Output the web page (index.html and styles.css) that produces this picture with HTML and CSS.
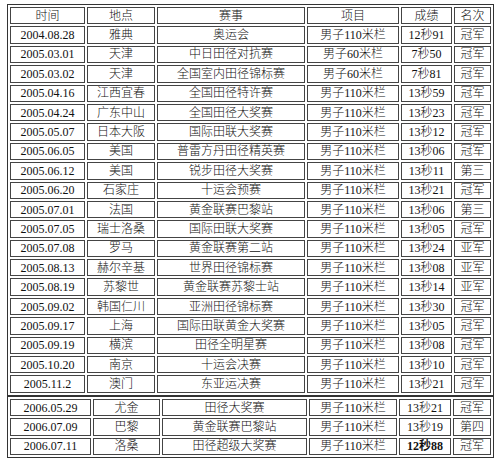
FILE: index.html
```html
<!DOCTYPE html>
<html>
<head>
<meta charset="utf-8">
<link rel="stylesheet" href="styles.css">
</head>
<body>
<div class="wrap">
<table class="rec rec-a">
<tr><td class="c1">时间</td><td class="c2">地点</td><td class="c3">赛事</td><td class="c4">项目</td><td class="c5">成绩</td><td class="c6">名次</td></tr>
<tr><td>2004.08.28</td><td>雅典</td><td>奥运会</td><td>男子110米栏</td><td>12秒91</td><td>冠军</td></tr>
<tr><td>2005.03.01</td><td>天津</td><td>中日田径对抗赛</td><td>男子60米栏</td><td>7秒50</td><td>冠军</td></tr>
<tr><td>2005.03.02</td><td>天津</td><td>全国室内田径锦标赛</td><td>男子60米栏</td><td>7秒81</td><td>冠军</td></tr>
<tr><td>2005.04.16</td><td>江西宜春</td><td>全国田径特许赛</td><td>男子110米栏</td><td>13秒59</td><td>冠军</td></tr>
<tr><td>2005.04.24</td><td>广东中山</td><td>全国田径大奖赛</td><td>男子110米栏</td><td>13秒23</td><td>冠军</td></tr>
<tr><td>2005.05.07</td><td>日本大阪</td><td>国际田联大奖赛</td><td>男子110米栏</td><td>13秒12</td><td>冠军</td></tr>
<tr><td>2005.06.05</td><td>美国</td><td>普雷方丹田径精英赛</td><td>男子110米栏</td><td>13秒06</td><td>冠军</td></tr>
<tr><td>2005.06.12</td><td>美国</td><td>锐步田径大奖赛</td><td>男子110米栏</td><td>13秒11</td><td>第三</td></tr>
<tr><td>2005.06.20</td><td>石家庄</td><td>十运会预赛</td><td>男子110米栏</td><td>13秒21</td><td>冠军</td></tr>
<tr><td>2005.07.01</td><td>法国</td><td>黄金联赛巴黎站</td><td>男子110米栏</td><td>13秒06</td><td>第三</td></tr>
<tr><td>2005.07.05</td><td>瑞士洛桑</td><td>国际田联大奖赛</td><td>男子110米栏</td><td>13秒05</td><td>冠军</td></tr>
<tr><td>2005.07.08</td><td>罗马</td><td>黄金联赛第二站</td><td>男子110米栏</td><td>13秒24</td><td>亚军</td></tr>
<tr><td>2005.08.13</td><td>赫尔辛基</td><td>世界田径锦标赛</td><td>男子110米栏</td><td>13秒08</td><td>亚军</td></tr>
<tr><td>2005.08.19</td><td>苏黎世</td><td>黄金联赛苏黎士站</td><td>男子110米栏</td><td>13秒14</td><td>亚军</td></tr>
<tr><td>2005.09.02</td><td>韩国仁川</td><td>亚洲田径锦标赛</td><td>男子110米栏</td><td>13秒30</td><td>冠军</td></tr>
<tr><td>2005.09.17</td><td>上海</td><td>国际田联黄金大奖赛</td><td>男子110米栏</td><td>13秒05</td><td>冠军</td></tr>
<tr><td>2005.09.19</td><td>横滨</td><td>田径全明星赛</td><td>男子110米栏</td><td>13秒08</td><td>冠军</td></tr>
<tr><td>2005.10.20</td><td>南京</td><td>十运会决赛</td><td>男子110米栏</td><td>13秒10</td><td>冠军</td></tr>
<tr><td>2005.11.2</td><td>澳门</td><td>东亚运决赛</td><td>男子110米栏</td><td>13秒21</td><td>冠军</td></tr>
</table>
<table class="rec rec-b">
<tr><td class="c1">2006.05.29</td><td class="c2">尤金</td><td class="c3">田径大奖赛</td><td class="c4">男子110米栏</td><td class="c5">13秒21</td><td class="c6">冠军</td></tr>
<tr><td>2006.07.09</td><td>巴黎</td><td>黄金联赛巴黎站</td><td>男子110米栏</td><td>13秒19</td><td>第四</td></tr>
<tr><td>2006.07.11</td><td>洛桑</td><td>田径超级大奖赛</td><td>男子110米栏</td><td class="best">12秒88</td><td>冠军</td></tr>
</table>
</div>
</body>
</html>
```

FILE: styles.css
```css
html, body {
  margin: 0;
  padding: 0;
  background: #fff;
}
.wrap {
  padding: 4px 0 0 7px;
}
.rec {
  width: 487px;
  table-layout: fixed;
  border-collapse: separate;
  border-spacing: 2px;
  border: 1px solid #333;
  font-family: "Liberation Serif", "Noto Sans CJK SC", serif;
  font-size: 12px;
  font-weight: 300;
  color: #111;
}
.rec td {
  box-sizing: border-box;
  height: 17.4px;
  padding: 0;
  border: 1px solid #444;
  text-align: center;
  vertical-align: middle;
  line-height: 14px;
  white-space: nowrap;
  overflow: hidden;
}
.rec-a .c1 { width: 75px; }
.rec-a .c2 { width: 68px; }
.rec-a .c3 { width: 148px; }
.rec-a .c4 { width: 92px; }
.rec-a .c5 { width: 51px; }
.rec-a .c6 { width: 37px; }
.rec-b .c1 { width: 81px; }
.rec-b .c2 { width: 67px; }
.rec-b .c3 { width: 145px; }
.rec-b .c4 { width: 88px; }
.rec-b .c5 { width: 52px; }
.rec-b .c6 { width: 38px; }
.best {
  font-weight: bold;
}
```
